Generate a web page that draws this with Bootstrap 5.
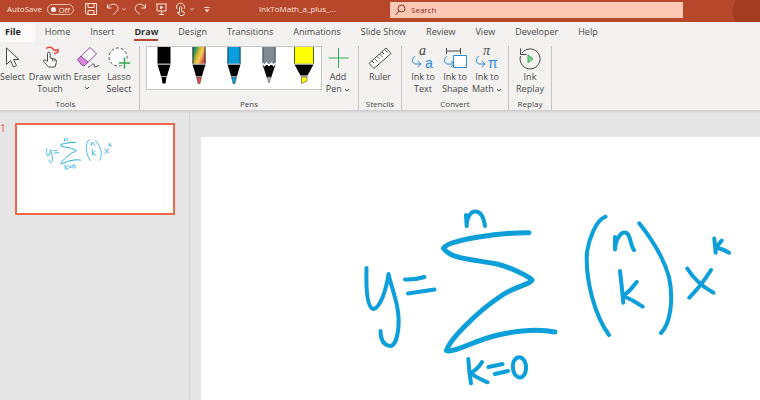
<!DOCTYPE html>
<html lang="en">
<head>
<meta charset="utf-8">
<meta name="viewport" content="width=device-width, initial-scale=1">
<title>InkToMath_a_plus_...</title>
<link href="https://cdn.jsdelivr.net/npm/bootstrap@5.3.0/dist/css/bootstrap.min.css" rel="stylesheet">
<style>
  body { font-family: "Open Sans", "Noto Sans", sans-serif; font-size: 9px; line-height: 12px; color: #494847; background: #e6e6e6; }
  button { font: inherit; color: inherit; background: none; border: 0; padding: 0; }
  svg { display: block; fill: none; stroke: currentColor; flex: none; }

  .title-bar { height: 22px; padding: 0 0 4px 7px; color: #fbe3dc; background: radial-gradient(circle at 752px 11px, #a23d22 0 19px, transparent 20px) #b7472a; }
  .quick-tools { width: 252px; }
  .auto-label { width: 40px; font-size: 8px; }
  .switch { width: 27px; height: 11px; border: 1px solid #eebfae; border-radius: 6px; font-size: 8px; line-height: 9px; padding: 0 3px; margin-right: 10px; }
  .knob { width: 5px; height: 5px; border-radius: 50%; background: #fff; }
  .doc-name { width: 131px; font-size: 8px; }
  .search { height: 16px; width: 293px; margin-top: 2px; background: #fdc9b5; color: #8f2d24; padding: 0 5px; gap: 5px; }
  .search input { border: 0; background: none; outline: 0; padding: 0; color: inherit; font-size: 8px; }
  .search input::placeholder { color: #8f2d24; opacity: 1; }

  .tab-row { background: #f3f2f1; height: 22px; }
  .tab-row button { padding: 0 10px; height: 20px; white-space: nowrap; }
  .tab-row .file-tab { background: #fcfbfa; padding: 0 14px 0 5px; color: #222; font-weight: 700; }
  .tab-row .current { color: #333; font-weight: 700; }
  .current span { border-bottom: 2px solid #b7472a; padding-bottom: 1px; }

  .ribbon { background: #f3f2f1; height: 67px; padding-top: 2px; border-bottom: 1px solid #d2d0ce; box-shadow: 0 1px 2px #cfcfcf; position: relative; }
  .group { border-right: 1px solid #c8c6c4; height: 64px; }
  .group-name { font-size: 8px; line-height: 12px; }
  .tools { width: 140px; }
  .pens { width: 219px; }
  .one-tool { width: 43px; }
  .convert { width: 107px; }
  .tool { width: 32px; white-space: nowrap; }
  .tool-wide { width: 42px; }
  .tool-first { width: 25px; }
  .tool svg { margin-bottom: 1px; overflow: visible; }
  .tool .chev { display: inline-block; margin: 0; vertical-align: middle; }
  .gallery { width: 176px; height: 44px; background: #fff; border: 1px solid #c8c6c4; margin: 0 0 0 6px; }
  svg text { stroke: none; }
  .glyph-ink { font: italic 14px "Liberation Serif", serif; fill: #444; }
  .glyph-type { font: 14px "Liberation Sans", sans-serif; fill: #2b8ad6; }

  .thumbs { width: 190px; border-right: 1px solid #d4d4d4; padding-top: 12px; }
  .slide-no { width: 15px; color: #e8553a; font-size: 10px; line-height: 10px; }
  .thumb { border: 2px solid #f0674a; background: #fff; }
  .canvas { padding: 26px 0 0 11px; }
  .ink { stroke: #0c9fd9; stroke-linecap: round; stroke-linejoin: round; }
</style>
</head>
<body class="vh-100 overflow-hidden d-flex flex-column">

<svg width="0" height="0" class="position-absolute" aria-hidden="true">
  <symbol id="formula" viewBox="0 0 870 489">
    <g class="ink" stroke-width="5" transform="translate(-201 -137)">
      <path stroke-width="4" d="M366.500 268C366 289 367 308 373.500 309C380 308 386 291 388.500 274C391 287 400 306 398.500 326C397.500 339 394 346 390 346C384 345 380.500 340 380.500 331M405 279.500Q415 280 424.500 277M408 293.500L434.500 289.500"/>
      <path d="M529 232.700C500 232.500 448 240 443.500 248.300C450 259 472 259 497 264C510 267 530 277 532 280C530 285 515 286 501 296C478 311 449 340 446.500 350.700C455 353 475 340 498 335C520 330 540 329 555 332"/>
      <path stroke-width="4" d="M466 215L466.700 226C467 216 471 211 476 211.500C482 212 484 219 485 226M468.300 359Q469 372 471 383.300M482 362Q478 369 470.700 373Q477 378 487.500 382.300M488.500 367L502.500 364M495 374L508 371M516.500 358C511 362 512 374 518 377C525 380 528 368 524.500 361C521 355 516 357 514 361"/>
      <path stroke-width="4" d="M605.500 216.700C596 220 589 239 587 252C585 280 595 316 609 335M639.300 223.300C654 242 664 259 669 277C674 301 670 324 661 333"/>
      <path stroke-width="4" d="M615 237L615 249.500C616 238 621 232 625 232.500C631 233 630 246 634 250M620 271Q622 288 623.300 302.700M636.700 282Q631 290 623.500 296Q633 300 642.700 306.700M687.300 268.500Q697 284 713.500 292.700M711 270Q701 286 689.300 297.700M714.300 238.500L715.700 252.700M721.700 240.500L716 247.500Q723 249 729 252.700"/>
    </g>
  </symbol>
</svg>

<header class="title-bar d-flex align-items-center flex-shrink-0">
  <div class="quick-tools d-flex align-items-center flex-shrink-0">
    <span class="auto-label" id="autosave">AutoSave</span>
    <button class="switch d-flex align-items-center justify-content-between" role="switch" aria-checked="false" aria-labelledby="autosave"><span class="knob"></span><span>Off</span></button>
    <svg width="140" height="14" viewBox="0 0 140 14" aria-label="Quick access" role="img">
      <path d="M1.500 1.500h11v11H3l-1.500-1.500zM4 1.500v4h6v-4M4 12.500v-4h6v4"/>
      <path d="M23.500 2v4h4M24 5.500C26 2 30 1 33 3.500C35 6 34 8 32 10L29 13M38.500 6.500l1.500 1.500l1.500-1.500"/>
      <path d="M61.500 2v4h-4M61 5.500C59 2 55 1 52.500 3.500C50.500 6 51 8 53 10L56 12.500"/>
      <path d="M72 2h11M73 2v7h9v-7M77.500 9v4M75 12.500h5"/><path fill="currentColor" stroke="none" d="M76 3.500v4l3.500-2z"/>
      <path d="M95.500 7V5.500a1 1 0 0 1 2 0V9l2.500 1c1 .5 0 3-1 3.500h-3c-1-1-2-2-2.500-3.500l2 1V7M93 7a4 4 0 1 1 7 0M106.500 6.500l1.500 1.500l1.500-1.500"/>
      <path d="M120.500 5.500h5"/><path fill="currentColor" stroke="none" d="M120.500 7.500h5l-2.500 2.800z"/>
    </svg>
  </div>
  <div class="doc-name flex-shrink-0">InkToMath_a_plus_...</div>
  <label class="search d-flex align-items-center">
    <svg width="11" height="12" viewBox="0 0 11 12" aria-hidden="true"><circle cx="6.500" cy="4.500" r="3.500"/><path d="M4 7L.5 11"/></svg>
    <input type="text" placeholder="Search" aria-label="Search">
  </label>
</header>

<nav class="tab-row d-flex flex-shrink-0" aria-label="Ribbon tabs">
  <button class="file-tab">File</button>
  <button>Home</button>
  <button>Insert</button>
  <button class="current"><span>Draw</span></button>
  <button>Design</button>
  <button>Transitions</button>
  <button>Animations</button>
  <button>Slide Show</button>
  <button>Review</button>
  <button>View</button>
  <button>Developer</button>
  <button>Help</button>
</nav>

<div class="ribbon d-flex flex-shrink-0">
  <section class="group tools d-flex flex-column justify-content-between">
    <div class="d-flex align-items-start">
      <button class="tool tool-first d-flex flex-column align-items-center">
        <svg width="22" height="24" viewBox="0 0 22 24"><path fill="#fff" d="M4.500 2v16.500l4-4l3 6.500l3-1.500l-3-6h5.500z"/></svg>Select
      </button>
      <button class="tool tool-wide ms-1 d-flex flex-column align-items-center">
        <svg width="24" height="24" viewBox="0 0 24 24"><path fill="#fff" d="M9.500 15V7.500a1.300 1.300 0 0 1 2.600 0V12l5 1.200c1.500.5 1.500 2 1.200 3.300L17 21h-6.500c-1.500-2-3.500-3.500-5-6c0-1.500 1.500-1.500 4 .5M14.500 13v2M16.800 13.500v2"/><path stroke="#f04438" stroke-width="1.500" d="M8 2.500c3-2.500 6-1 7 .5s3 2 5 .5c1 2-1 4-4 4"/></svg>Draw with<br>Touch
      </button>
      <button class="tool d-flex flex-column align-items-center">
        <svg width="24" height="24" viewBox="0 0 24 24"><path fill="#fff" stroke="#9b3fa5" d="M2.500 13.500L15 1.500l6.500 6.500L9.500 19.500z"/><path fill="#d18bd7" stroke="#9b3fa5" d="M2.500 13.500L6 10l7 6l-3.500 3.500H7z"/><path d="M13 21c3 0 4-4 6-3c1 1-1 3 1 3c1 0 2-1 4-1.500"/></svg>Eraser
        <svg class="chev" width="6" height="10" viewBox="0 0 6 10"><path d="M1 4l2 2l2-2"/></svg>
      </button>
      <button class="tool d-flex flex-column align-items-center">
        <svg width="24" height="24" viewBox="0 0 24 24"><circle cx="11" cy="11" r="9" fill="#fff" stroke-dasharray="3 2"/><path stroke="#f3f2f1" stroke-width="5" d="M17.500 12v10M12.500 17h10"/><path stroke="#35a853" stroke-width="1.500" d="M17.500 11.500v11M12 17h11"/></svg>Lasso<br>Select
      </button>
    </div>
    <div class="group-name text-center pe-2">Tools</div>
  </section>

  <section class="group pens d-flex flex-column justify-content-between">
    <div class="d-flex align-items-start">
      <div class="gallery flex-shrink-0">
        <svg width="174" height="42" viewBox="0 0 174 42" role="img" aria-label="Pens">
          <defs>
            <linearGradient id="rainbow" x1="0" y1="0" x2="1" y2=".5"><stop offset="0" stop-color="#2173b8"/><stop offset=".25" stop-color="#2f9e4b"/><stop offset=".5" stop-color="#d9b43a"/><stop offset=".7" stop-color="#f2cf56"/><stop offset="1" stop-color="#d44c3a"/></linearGradient>
            <g id="nib"><path fill="#000" stroke="none" d="M-6.500 17.500h13L3 29h-6z"/><path stroke="#bbb" d="M-6.500 17H6.500M-3 29.500h6"/></g>
          </defs>
          <g transform="translate(17 0)"><path fill="#000" stroke="none" d="M-6.500 0h13v17h-13zM-2.500 30h5l-1 6.500h-3z"/><use href="#nib"/></g>
          <g transform="translate(52 0)"><path fill="url(#rainbow)" stroke="none" d="M-6.500 0h13v17h-13z"/><path stroke="#333" d="M-6 0v17M6 0v17"/><use href="#nib"/><path fill="#d9534f" stroke="#333" stroke-width=".5" d="M-2.500 30h5l-1.500 6.500h-2z"/></g>
          <g transform="translate(87 0)"><path fill="#0a9ddb" stroke="none" d="M-6.500 0h13v17h-13z"/><path stroke="#164b66" d="M-6 0v17M6 0v17"/><use href="#nib"/><path fill="#0a9ddb" stroke="#333" stroke-width=".5" d="M-2.500 30h5l-1.500 6.500h-2z"/></g>
          <g transform="translate(122 0)"><path fill="#7f8c94" stroke="none" d="M-6.500 0h13v17h-13z"/><path stroke="#48535a" d="M-6 0v16M6 0v16"/><path fill="#000" stroke="none" d="M-6.500 17.500h13L2 31h-4z"/><path stroke="#fff" stroke-width="1.500" d="M-6.500 16l2 2.500l2-2.500l2.500 2.500L2.500 16l2 2.500l2-2.500"/><path fill="#bbb" stroke="#555" stroke-width=".6" d="M-2 30h4L0 36z"/></g>
          <g transform="translate(157 0)"><path fill="#ff0" stroke="none" d="M-10 0h20v17h-20z"/><path stroke="#55551a" d="M-9.500 0v17M9.500 0v17"/><path fill="#000" stroke="none" d="M-9.500 17.500h19L3.500 28.500h-7z"/><path stroke="#bbb" d="M-10 17h20M-3.500 29.500h7"/><path fill="#ff0" stroke="#444" stroke-width=".6" d="M-2.500 30h5.500v4L-2.500 36.500z"/></g>
        </svg>
      </div>
      <button class="tool d-flex flex-column align-items-center">
        <svg width="22" height="24" viewBox="0 0 22 24"><path stroke="#35a853" d="M11.500 2v20M1.500 12h20"/></svg>Add<br>
        <span>Pen <svg class="chev" width="6" height="6" viewBox="0 0 6 6"><path d="M1 2l2 2l2-2"/></svg></span>
      </button>
    </div>
    <div class="group-name text-center">Pens</div>
  </section>

  <section class="group one-tool d-flex flex-column align-items-center justify-content-between">
    <button class="tool d-flex flex-column align-items-center">
      <svg width="24" height="24" viewBox="0 0 24 24"><path fill="#fff" d="M1 17.500L18 2l5 5.500L6 22.500zM4 15l2 2M6.500 12.500l3 3M9 10.500l2 2M11.500 8l3 3M14 6l2 2M16.500 3.500l3 3"/></svg>Ruler
    </button>
    <div class="group-name">Stencils</div>
  </section>

  <section class="group convert d-flex flex-column align-items-center justify-content-between">
    <div class="d-flex align-items-start">
      <button class="tool d-flex flex-column align-items-center">
        <svg width="24" height="24" viewBox="0 0 24 24"><text class="glyph-ink" x="8" y="9">a</text><text class="glyph-type" x="14" y="22">a</text><path stroke="#2b8ad6" d="M4 10c-4 3-3 8 1 8h5M7 15l3 3l-3 3"/></svg>Ink to<br>Text
      </button>
      <button class="tool d-flex flex-column align-items-center">
        <svg width="24" height="24" viewBox="0 0 24 24"><path d="M3 5h15M3.500 2v6M17.500 2v6"/><path fill="#fff" stroke="#2b8ad6" d="M10.500 9.500h13v12h-13z"/><path stroke="#2b8ad6" d="M4 10c-4 3-3 8 1 8h6M8 15l3 3l-3 3"/></svg>Ink to<br>Shape
      </button>
      <button class="tool d-flex flex-column align-items-center">
        <svg width="24" height="24" viewBox="0 0 24 24"><text class="glyph-ink" x="8" y="9">π</text><text class="glyph-type" x="13" y="22">π</text><path stroke="#2b8ad6" d="M4 10c-4 3-3 8 1 8h5M7 15l3 3l-3 3"/></svg>Ink to<br>
        <span>Math <svg class="chev" width="6" height="6" viewBox="0 0 6 6"><path d="M1 2l2 2l2-2"/></svg></span>
      </button>
    </div>
    <div class="group-name">Convert</div>
  </section>

  <section class="group one-tool d-flex flex-column align-items-center justify-content-between">
    <button class="tool d-flex flex-column align-items-center">
      <svg width="24" height="24" viewBox="0 0 24 24"><path d="M4 7a10 10 0 1 1-1.500 3M2.500 2.500v6h6"/><path fill="#7fd69a" stroke="#35a853" d="M10 9v7.500l5-3.700z"/></svg>Ink<br>Replay
    </button>
    <div class="group-name">Replay</div>
  </section>
</div>

<main class="d-flex flex-fill overflow-hidden">
  <aside class="thumbs d-flex align-items-start flex-shrink-0">
    <span class="slide-no">1</span>
    <button class="thumb" aria-label="Slide 1"><svg width="156" height="88"><use href="#formula"/></svg></button>
  </aside>
  <div class="canvas flex-fill overflow-hidden d-flex">
    <div class="bg-white flex-fill overflow-hidden">
      <svg width="870" height="489" role="img" aria-label="Handwritten binomial sum"><use href="#formula"/></svg>
    </div>
  </div>
</main>

<script src="https://cdn.jsdelivr.net/npm/bootstrap@5.3.0/dist/js/bootstrap.bundle.min.js"></script>
</body>
</html>
